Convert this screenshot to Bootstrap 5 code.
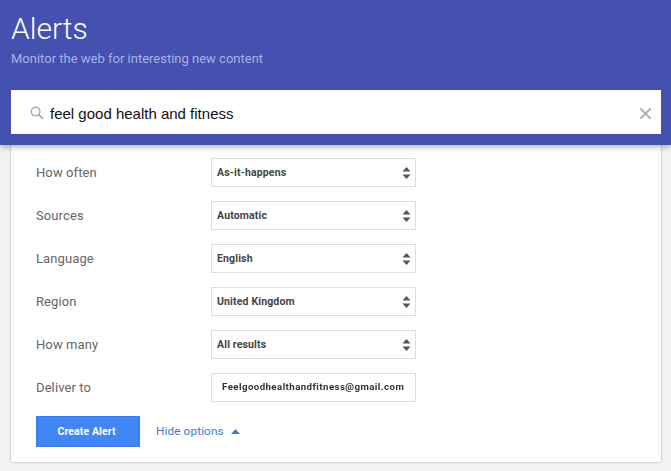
<!DOCTYPE html>
<html lang="en"><head><meta charset="utf-8"><title>Alerts</title>
<link rel="stylesheet" href="https://cdn.jsdelivr.net/npm/bootstrap@5.3.0/dist/css/bootstrap.min.css">
<style>
html,body{height:471px;overflow:hidden}
body{background:#f2f2f2;font-family:Roboto,"Liberation Sans",sans-serif;color:#666}
.hero{background:#4451b0;height:145px;padding:0 10px 11px 11px;position:relative;z-index:2;box-shadow:0 2px 6px rgba(0,0,0,.3)}
.hero h1{font-size:30px;font-weight:300;color:#fff;line-height:38px;margin:0;padding-top:10px}
.hero p{font-size:13px;color:#a9b0e4;line-height:18px;margin:2px 0 0}
.searchbar{background:#fff;height:44px;margin-top:22px;padding:2px 9px 0 19px;color:#111;font-size:15px;font-family:"Liberation Sans",sans-serif}
.searchbar span{padding-top:2px}
.lens{margin-right:6px}
.panel{background:#fff;margin:0 10px 0 11px;height:317px;padding:13px 25px 0;box-shadow:0 0 2px rgba(0,0,0,.35)}
.optrow{height:29px;margin-bottom:14px}
.optrow label{width:175px;font-size:13px;letter-spacing:.1px;color:#666}
.pick{width:205px;height:29px;border:1px solid #ddd;background:#fff;padding:0 4px 0 5px;font-size:10.5px;font-weight:700;color:#444;letter-spacing:.15px}
.updown{width:9px;height:12px}
.mailaddr{font-size:9.7px;letter-spacing:.42px;color:#333;padding-left:5px;filter:blur(.3px)}
.createbtn{--bs-btn-bg:#4285f4;--bs-btn-border-color:#3b78e0;--bs-btn-hover-bg:#3b78e0;--bs-btn-hover-border-color:#3b78e0;--bs-btn-color:#fff;--bs-btn-hover-color:#fff;--bs-btn-border-radius:0;width:104px;height:31px;padding:0 3px 0 0;font-size:10.5px;font-weight:700;letter-spacing:.1px}
.hidelink{color:#4a76c9;font-size:11.8px;letter-spacing:.1px;text-decoration:none}
.actions{margin-top:1px}
.caret-up{margin-left:7px}
</style></head><body>
<div class="hero">
<h1>Alerts</h1>
<p>Monitor the web for interesting new content</p>
<div class="searchbar d-flex align-items-center">
<svg width="14" height="14" viewBox="0 0 15 15" fill="none" stroke="#aaa" class="lens flex-shrink-0"><circle cx="6" cy="6" r="4.6" stroke-width="1.5"/><path d="M9.3 9.3 13.8 13.8" stroke-width="2"/></svg>
<span>feel good health and fitness</span>
<svg class="ms-auto" width="13" height="13" viewBox="0 0 14 14" stroke="#aaa" stroke-width="2"><path d="M1.5 1.5 12.5 12.5M12.5 1.5 1.5 12.5"/></svg>
</div>
</div>
<div class="panel">
<div class="optrow d-flex align-items-center"><label>How often</label><div class="pick d-flex align-items-center justify-content-between"><span>As-it-happens</span><svg class="updown" viewBox="0 0 9 12" fill="#555"><path d="M4.5 0 8.5 4.500H.5zM4.500 12 .5 7.500h8z"/></svg></div></div>
<div class="optrow d-flex align-items-center"><label>Sources</label><div class="pick d-flex align-items-center justify-content-between"><span>Automatic</span><svg class="updown" viewBox="0 0 9 12" fill="#555"><path d="M4.5 0 8.5 4.500H.5zM4.500 12 .5 7.500h8z"/></svg></div></div>
<div class="optrow d-flex align-items-center"><label>Language</label><div class="pick d-flex align-items-center justify-content-between"><span>English</span><svg class="updown" viewBox="0 0 9 12" fill="#555"><path d="M4.5 0 8.5 4.500H.5zM4.500 12 .5 7.500h8z"/></svg></div></div>
<div class="optrow d-flex align-items-center"><label>Region</label><div class="pick d-flex align-items-center justify-content-between"><span>United Kingdom</span><svg class="updown" viewBox="0 0 9 12" fill="#555"><path d="M4.5 0 8.5 4.500H.5zM4.500 12 .5 7.500h8z"/></svg></div></div>
<div class="optrow d-flex align-items-center"><label>How many</label><div class="pick d-flex align-items-center justify-content-between"><span>All results</span><svg class="updown" viewBox="0 0 9 12" fill="#555"><path d="M4.5 0 8.5 4.500H.5zM4.500 12 .5 7.500h8z"/></svg></div></div>
<div class="optrow d-flex align-items-center"><label>Deliver to</label><div class="pick d-flex align-items-center"><span class="mailaddr">Feelgoodhealthandfitness@gmail.com</span></div></div>
<div class="actions d-flex align-items-center">
<button type="button" class="btn createbtn">Create Alert</button>
<a class="hidelink ms-3 d-flex align-items-center" href="#">Hide options<svg class="caret-up" width="9" height="5" viewBox="0 0 9 5" fill="#4a76c9"><path d="M4.5 0 9 5H0z"/></svg></a>
</div>
</div>
</body></html>
